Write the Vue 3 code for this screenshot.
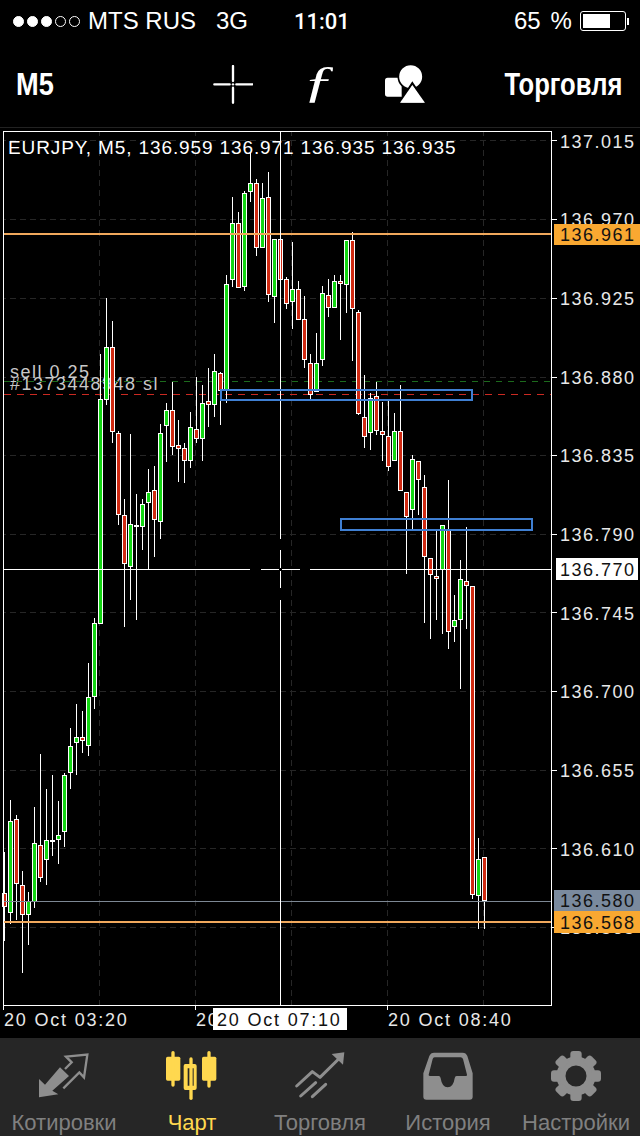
<template>
  <div class="phone">
    <div class="status">
      <div class="dots">
        <i v-for="d in 5" :key="d" :class="{ on: d < 4 }"></i>
      </div>
      <span class="carrier">MTS RUS</span>
      <span class="net">3G</span>
      <span class="clock">11:01</span>
      <span class="pct">65 %</span>
      <div class="battery"><b></b></div>
      <div class="nub"></div>
    </div>

    <div class="toolbar">
      <span class="tf">M5</span>
      <div class="tools">
        <svg class="tool" width="40" height="40" viewBox="38 0 120 120">
          <path d="M42 58H88M108 58H156M98 3V48M98 68V113" stroke="#fff" stroke-width="7" stroke-linecap="round" fill="none" />
          <circle cx="98" cy="58" r="3.5" fill="#fff" />
        </svg>
        <span class="fn">ƒ</span>
        <svg class="tool" width="40" height="40" viewBox="555 0 120 120">
          <path d="M555 46Q555 38 563 38H605V95H563Q555 95 555 87Z" fill="#fff" />
          <circle cx="632" cy="35" r="37" fill="#fff" stroke="#000" stroke-width="5" />
          <path d="M637 55L678 116H597Z" fill="#fff" stroke="#000" stroke-width="7" />
          <path d="M637 60L675 113H600Z" fill="#fff" />
        </svg>
      </div>
      <span class="title">Торговля</span>
    </div>

    <svg class="chart" width="640" height="910" viewBox="0 128 640 910">
      <g shape-rendering="crispEdges">
        <rect v-for="y in gridY" :key="'g' + y" x="4" :y="y" width="547" height="1" fill="url(#hdash)" />
        <rect v-for="x in gridX" :key="'v' + x" :x="x" y="132" width="1" height="873" fill="url(#vdash)" />
      </g>
      <defs>
        <pattern id="hdash" width="10" height="1" patternUnits="userSpaceOnUse"><rect width="6" height="1" fill="#262626" /></pattern>
        <pattern id="vdash" width="1" height="10" patternUnits="userSpaceOnUse"><rect width="1" height="6" fill="#262626" /></pattern>
      </defs>

      <text class="lbl" x="8" y="154">EURJPY, M5, 136.959 136.971 136.935 136.935</text>
      <text class="lbl dim" x="10" y="378">sell 0.25</text>
      <text class="lbl dim" x="10" y="390">#1373448948 sl</text>

      <g shape-rendering="crispEdges">
        <path d="M4 381.5H551" stroke="#1c6a1c" stroke-dasharray="6 6" />
        <path d="M4 394.5H551" stroke="#cc2a22" stroke-dasharray="7 6" />
        <template v-for="(c, i) in candles" :key="i">
          <rect :x="cx(i)" :y="c[3]" width="1" :height="c[4] - c[3]" fill="#fff" />
          <rect v-if="c[0] === 'w'" :x="cx(i) - 2" :y="c[1]" width="5" height="2" fill="#fff" />
          <template v-else>
            <rect :x="cx(i) - 2" :y="c[1]" width="5" :height="c[2] - c[1]" fill="#fff" />
            <rect :x="cx(i) - 1" :y="c[1] + 1" width="3" :height="c[2] - c[1] - 2" :fill="c[0] === 'g' ? '#13d613' : '#d02a12'" />
          </template>
        </template>

        <rect x="4" y="901" width="547" height="1" fill="#7d8894" />
        <rect x="4" y="233" width="548" height="2" fill="#f0a85c" />
        <rect x="4" y="921" width="548" height="2" fill="#f0a85c" />

        <!-- crosshair with its gaps round the centre -->
        <path d="M4 569.5H250M261 569.5H300M310 569.5H551M280.5 132V539M280.5 550V588M280.5 600V1005" stroke="#fff" fill="none" />
        <rect x="279" y="568" width="3" height="3" fill="#000" />

        <rect x="220.5" y="389.5" width="251" height="10" fill="none" stroke="#3f7fd2" stroke-width="2" />
        <rect x="340.5" y="518.5" width="191" height="11" fill="none" stroke="#3f7fd2" stroke-width="2" />

        <!-- frame and ticks -->
        <path d="M3.5 1005V131.5H551.5V1005.5H3" stroke="#fff" fill="none" />
        <rect v-for="y in gridY" :key="'t' + y" x="552" :y="y" width="5" height="1" fill="#fff" />
        <rect v-for="x in [3, 195, 387]" :key="'b' + x" :x="x" y="1006" width="1" height="4" fill="#fff" />
      </g>

      <text v-for="p in prices" :key="p.t" class="axis" x="560" :y="p.y">{{ p.t }}</text>

      <rect x="554" y="224" width="86" height="21" fill="#f9a831" />
      <text class="axis dark" x="560" y="241">136.961</text>
      <rect x="556" y="558" width="82" height="22" fill="#fff" />
      <text class="axis dark" x="560" y="576">136.770</text>
      <rect x="554" y="890" width="86" height="21" fill="#7a8a9e" />
      <text class="axis dark" x="560" y="907">136.580</text>
      <rect x="554" y="911" width="86" height="22" fill="#f9a831" />
      <text class="axis dark" x="560" y="929">136.568</text>

      <text class="axis time" x="4" y="1026">20 Oct 03:20</text>
      <text class="axis time" x="196" y="1026">20 Oct 06:00</text>
      <rect x="213" y="1008" width="134" height="22" fill="#fff" />
      <text class="axis time dark" x="217" y="1026">20 Oct 07:10</text>
      <text class="axis time" x="388" y="1026">20 Oct 08:40</text>
    </svg>

    <div class="tabs">
      <div class="tab">
        <svg width="64" height="52" viewBox="36 30 192 156">
          <path d="M57 172L57 117L75 134L120 82L147 108L97 152L115 163Z" fill="#8e8e8e" />
          <path d="M130 145L178 97L192 112L202 44L138 50L155 67L135 87" fill="none" stroke="#8e8e8e" stroke-width="7" />
        </svg>
        <span>Котировки</span>
      </div>
      <div class="tab active">
        <svg width="64" height="52" viewBox="420 30 192 156">
          <g fill="#ffd84f">
            <rect x="438" y="50" width="43" height="72" rx="5" />
            <rect x="454" y="33" width="10" height="107" rx="5" />
            <rect x="546" y="50" width="43" height="72" rx="5" />
            <rect x="562" y="33" width="10" height="110" rx="5" />
            <rect x="508" y="52" width="10" height="128" rx="5" />
            <path d="M496 72H524Q530 72 530 78V144Q530 150 524 150H496Q491 150 491 144V78Q491 72 496 72ZM503 85V137H521V85Z" fill-rule="evenodd" />
          </g>
        </svg>
        <span>Чарт</span>
      </div>
      <div class="tab">
        <svg width="64" height="52" viewBox="24 30 192 156">
          <path d="M50 138L97 95L120 112L185 48M62 168L107 128M97 170L137 133" fill="none" stroke="#8e8e8e" stroke-width="9" stroke-linecap="round" stroke-linejoin="round" />
          <path d="M155 42L193 37L189 74Z" fill="#8e8e8e" />
        </svg>
        <span>Торговля</span>
      </div>
      <div class="tab">
        <svg width="64" height="52" viewBox="408 30 192 156">
          <path d="M462 38H548Q558 38 562 48L578 100V170Q578 179 569 179H439Q430 179 430 170V100L448 48Q452 38 462 38ZM464 52Q459 52 458 57L446 104Q445 108 451 108H476Q481 108 482 115Q486 142 503 142Q520 142 524 115Q525 108 530 108H557Q562 108 561 104L549 57Q547 52 542 52Z" fill="#8e8e8e" fill-rule="evenodd" />
        </svg>
        <span>История</span>
      </div>
      <div class="tab">
        <svg width="64" height="52" viewBox="792 30 192 156">
          <circle cx="888" cy="108" r="45" fill="none" stroke="#8e8e8e" stroke-width="27" />
          <rect v-for="a in 8" :key="a" x="871" y="33" width="34" height="30" rx="9" fill="#8e8e8e" :transform="'rotate(' + a * 45 + ' 888 108)'" />
        </svg>
        <span>Настройки</span>
      </div>
    </div>
  </div>
</template>

<script setup>
const gridY = [140, 219, 298, 377, 455, 534, 612, 691, 770, 848, 927]
const gridX = [99, 195, 291, 387, 483]

const prices = [
  { t: '137.015', y: 148 },
  { t: '136.970', y: 226 },
  { t: '136.925', y: 305 },
  { t: '136.880', y: 384 },
  { t: '136.835', y: 462 },
  { t: '136.790', y: 541 },
  { t: '136.745', y: 620 },
  { t: '136.700', y: 698 },
  { t: '136.655', y: 777 },
  { t: '136.610', y: 856 },
  { t: '136.565', y: 934 }
]

// colour, body top, body bottom, wick top, wick bottom
const candles = [
  ['r', 893, 907, 852, 941], ['g', 821, 913, 800, 924], ['r', 819, 884, 815, 920], ['r', 885, 915, 871, 973],
  ['g', 901, 915, 892, 945], ['g', 843, 902, 807, 908], ['r', 845, 878, 754, 882], ['g', 840, 860, 789, 885],
  ['w', 840, 842, 775, 856], ['g', 835, 840, 801, 864], ['g', 775, 832, 773, 847], ['g', 746, 773, 728, 789],
  ['g', 737, 743, 704, 775], ['r', 737, 741, 711, 753], ['g', 697, 746, 663, 756], ['g', 623, 697, 618, 709],
  ['g', 399, 624, 354, 624], ['g', 347, 400, 298, 405], ['r', 347, 432, 321, 443], ['r', 433, 515, 431, 525],
  ['r', 515, 564, 499, 627], ['g', 524, 567, 434, 600], ['w', 525, 527, 494, 620], ['g', 504, 527, 499, 550],
  ['g', 492, 503, 469, 569], ['r', 490, 520, 466, 557], ['g', 433, 522, 424, 539], ['g', 410, 426, 403, 462],
  ['r', 410, 447, 382, 455], ['r', 445, 449, 420, 482], ['r', 448, 461, 443, 483], ['g', 427, 461, 412, 468],
  ['r', 429, 439, 377, 443], ['g', 403, 439, 385, 461], ['r', 401, 405, 368, 427], ['g', 371, 405, 354, 417],
  ['r', 373, 391, 372, 425], ['g', 284, 390, 275, 403], ['g', 223, 280, 197, 287], ['r', 223, 288, 212, 288],
  ['g', 193, 287, 191, 291], ['g', 183, 192, 152, 202], ['r', 183, 248, 179, 256], ['g', 198, 248, 183, 248],
  ['r', 197, 295, 172, 302], ['g', 239, 297, 239, 323], ['r', 239, 280, 239, 280], ['r', 279, 304, 277, 309],
  ['g', 289, 302, 242, 329], ['r', 289, 320, 281, 320], ['r', 319, 360, 296, 368], ['r', 363, 395, 354, 399],
  ['g', 363, 392, 333, 392], ['g', 293, 360, 286, 366], ['r', 295, 308, 279, 317], ['g', 281, 308, 275, 308],
  ['r', 281, 284, 275, 340], ['g', 240, 285, 240, 313], ['r', 240, 309, 232, 361], ['r', 312, 414, 310, 415],
  ['r', 417, 437, 375, 448], ['g', 398, 433, 393, 450], ['r', 396, 431, 382, 435], ['r', 431, 435, 402, 461],
  ['r', 436, 467, 401, 471], ['g', 431, 461, 413, 461], ['r', 431, 491, 385, 491], ['r', 492, 517, 492, 574],
  ['g', 459, 510, 455, 529], ['r', 461, 480, 461, 515], ['r', 487, 557, 475, 623], ['r', 558, 575, 558, 639],
  ['r', 576, 579, 530, 620], ['g', 525, 570, 525, 634], ['r', 530, 632, 480, 649], ['g', 620, 627, 595, 642],
  ['g', 579, 620, 560, 689], ['r', 581, 586, 527, 629], ['r', 586, 895, 586, 899], ['g', 859, 896, 838, 929],
  ['r', 857, 901, 857, 929]
]

function cx(i) {
  return 4 + 6 * i
}
</script>

<style scoped>
.phone {
  width: 640px;
  height: 1136px;
  background: #000;
  color: #fff;
  font-family: "Liberation Sans", Arial, sans-serif;
  display: flex;
  flex-direction: column;
  overflow: hidden;
}

.status {
  height: 42px;
  flex: none;
  display: flex;
  align-items: center;
  font-size: 24px;
  padding-left: 13px;
  box-sizing: border-box;
}

.dots {
  display: flex;
  gap: 2px;
  width: 75px;
}

.dots i {
  width: 9px;
  height: 9px;
  border: 1px solid #fff;
  border-radius: 50%;
  margin-right: 1px;
}

.dots i.on {
  background: #fff;
}

.net {
  margin-left: 20px;
}

.clock {
  margin-left: 46px;
  font-family: Roboto, "Liberation Sans", sans-serif;
  font-weight: 500;
  font-size: 22px;
  width: 220px;
}

.pct {
  word-spacing: 3px;
}

.battery {
  width: 46px;
  height: 20px;
  border: 1px solid #fff;
  border-radius: 3px;
  padding: 2px;
  margin-left: 8px;
  box-sizing: border-box;
}

.battery b {
  display: block;
  width: 27px;
  height: 14px;
  background: #fff;
}

.nub {
  width: 2px;
  height: 7px;
  background: #fff;
  margin-left: 1px;
}

.toolbar {
  height: 86px;
  flex: none;
  box-sizing: border-box;
  border-bottom: 1px solid #222;
  display: flex;
  align-items: center;
  padding: 0 18px 0 16px;
}

.tf,
.title {
  font-weight: 700;
  font-size: 32px;
  transform: scaleX(0.8);
}

.tf {
  transform: scaleX(0.85);
  transform-origin: left center;
}

.tools {
  margin-left: 153px;
  width: 212px;
  display: flex;
  justify-content: space-between;
  align-items: center;
}

.title {
  margin-left: auto;
  transform-origin: right center;
}

.fn {
  font-family: "Liberation Serif", serif;
  font-style: italic;
  font-size: 44px;
  line-height: 40px;
  transform: scaleX(1.5) translateY(-3px);
}

.chart {
  display: block;
  flex: none;
}

.lbl {
  font-size: 19px;
  letter-spacing: 0.88px;
  fill: #fff;
}

.lbl.dim {
  font-size: 18px;
  letter-spacing: 1.5px;
  fill: #c8c8c8;
}

.axis {
  font-size: 18px;
  letter-spacing: 1.5px;
  fill: #e8e8e8;
}

.axis.time {
  letter-spacing: 1.8px;
}

.axis.dark {
  fill: #111;
}

.tabs {
  flex: 1;
  display: flex;
  background: #262626;
}

.tab {
  width: 128px;
  display: flex;
  flex-direction: column;
  align-items: center;
  padding-top: 12px;
  color: #808080;
  font-size: 22px;
  line-height: 23px;
}

.tab svg {
  display: block;
  margin-bottom: 9px;
}

.tab.active {
  color: #ffd84f;
}
</style>
